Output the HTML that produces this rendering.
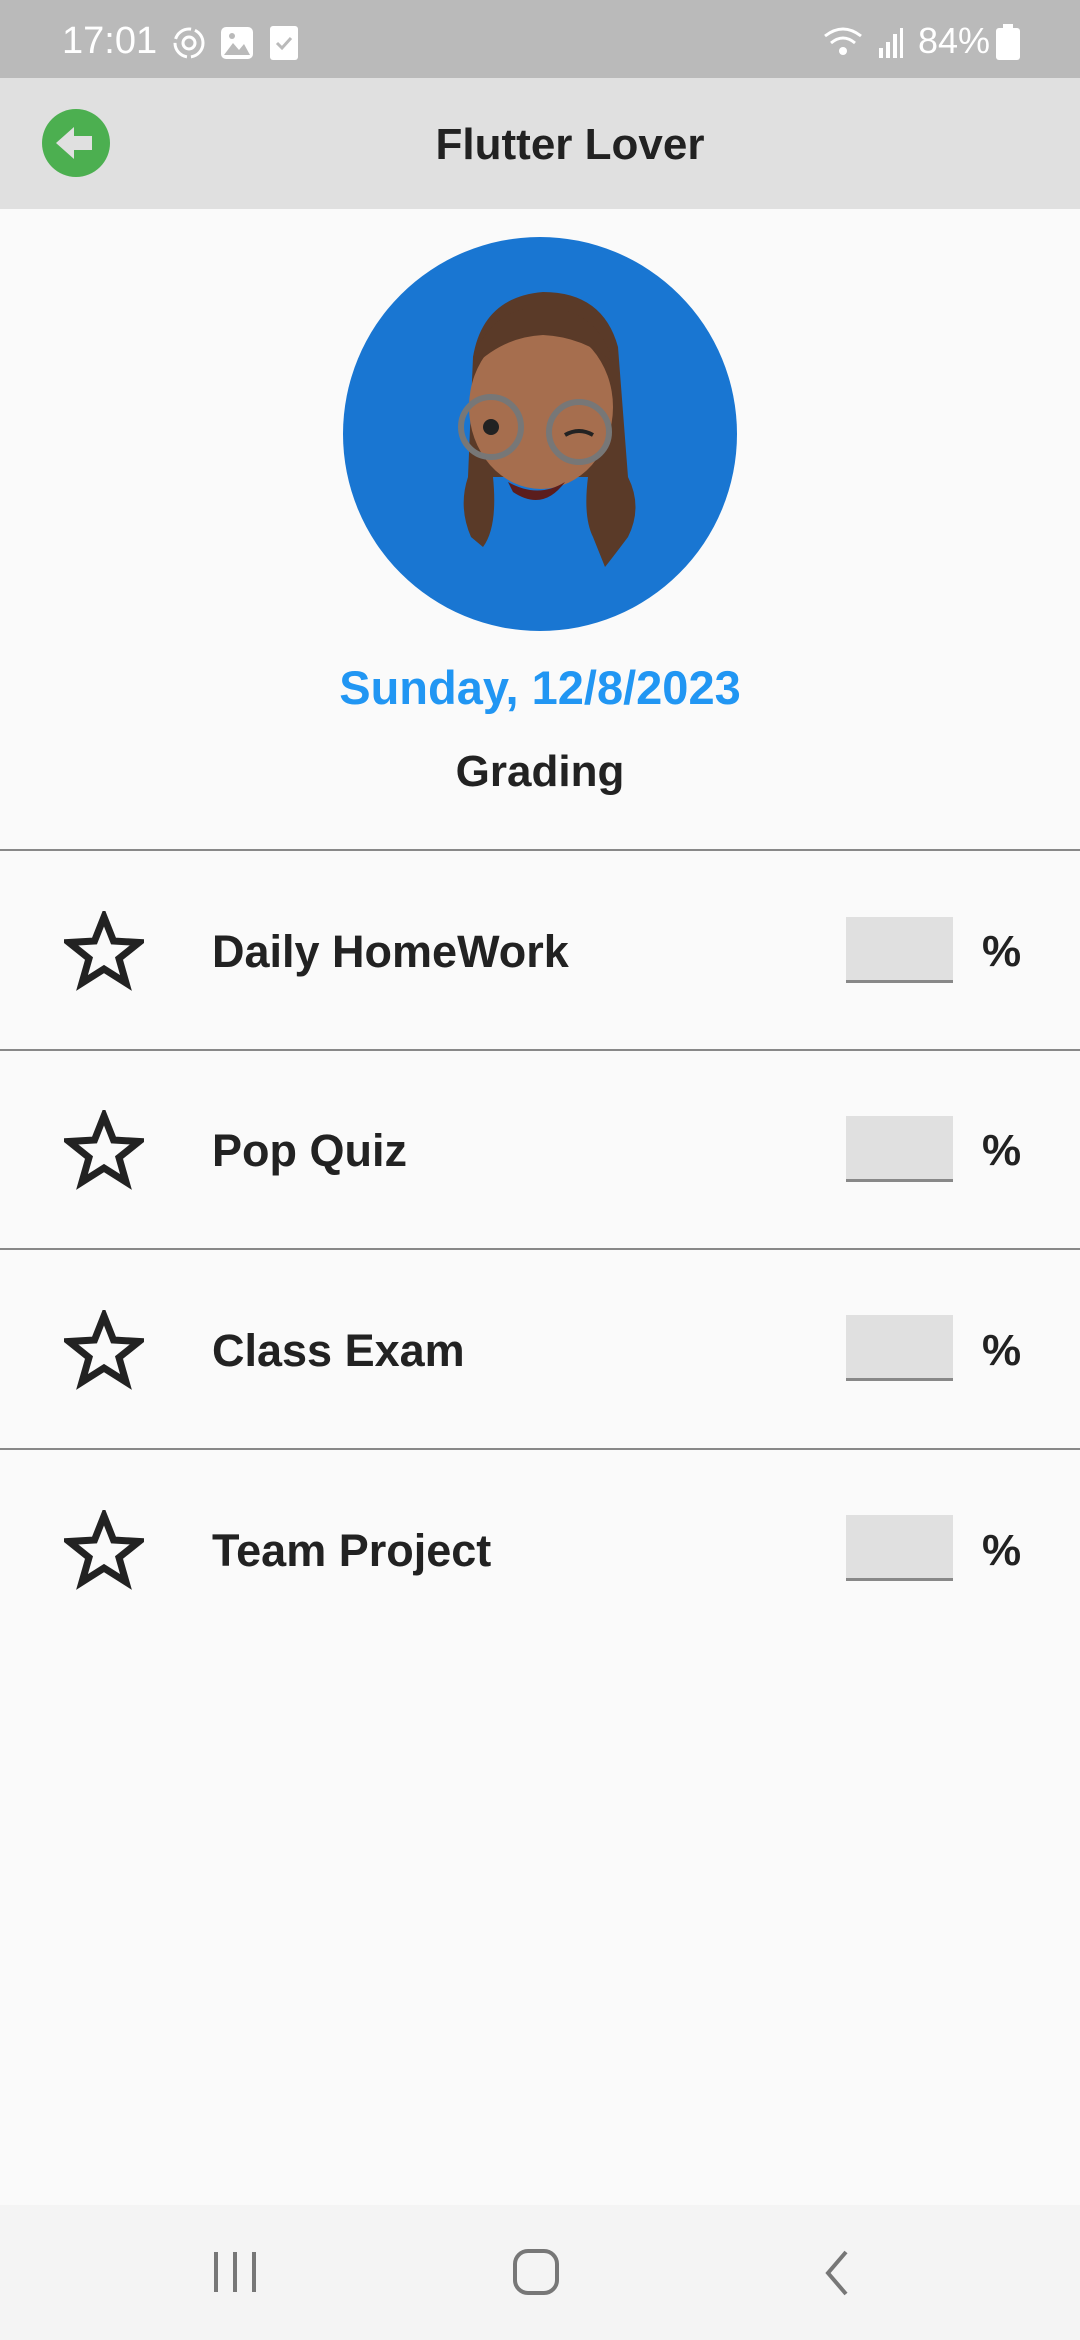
<!DOCTYPE html>
<html><head><meta charset="utf-8"><style>
*{margin:0;padding:0;box-sizing:border-box}
body{width:1080px;height:2340px;background:#fafafa;font-family:"Liberation Sans",Roboto,sans-serif;position:relative;overflow:hidden}
.abs{position:absolute}
.status{left:0;top:0;width:1080px;height:78px;background:#bababa;color:#fff}
.appbar{left:0;top:78px;width:1080px;height:131px;background:#e0e0e0}
.title{left:0;width:1140px;top:120px;text-align:center;font-size:44px;font-weight:bold;color:#222}
.div{left:0;width:1080px;height:2px;background:#888}
.lbl{left:212px;font-size:45px;font-weight:bold;color:#222}
.box{left:846px;width:107px;height:66px;background:#e0e0e0;border-bottom:3px solid #888}
.pct{left:982px;font-size:44px;font-weight:bold;color:#222}
.star{left:64px}
</style></head><body>
<div class="abs status">
 <div class="abs" style="left:62px;top:20px;font-size:38px">17:01</div>
 <svg class="abs" style="left:172px;top:26px" width="34" height="34" viewBox="0 0 34 34"><circle cx="17" cy="17" r="14" fill="none" stroke="#fff" stroke-width="3" stroke-dasharray="20 4"/><circle cx="17" cy="17" r="6" fill="none" stroke="#fff" stroke-width="3"/></svg>
 <svg class="abs" style="left:221px;top:27px" width="32" height="32"><rect width="32" height="32" rx="5" fill="#fff"/><path d="M3 28 L12 16 L18 23 L23 17 L29 28Z" fill="#bababa"/><circle cx="11" cy="9" r="3" fill="#bababa"/></svg>
 <svg class="abs" style="left:270px;top:26px" width="28" height="34"><rect width="28" height="34" rx="3" fill="#fff"/><path d="M7 17 L12 22 L21 12" stroke="#bababa" stroke-width="3" fill="none"/></svg>
 <svg class="abs" style="left:823px;top:26px" width="80" height="34"><path d="M2 10 Q20 -4 38 10" stroke="#fff" stroke-width="3" fill="none"/><path d="M8 17 Q20 7 32 17" stroke="#fff" stroke-width="3" fill="none"/><circle cx="20" cy="25" r="4" fill="#fff"/><rect x="56" y="22" width="4" height="10" fill="#fff"/><rect x="63" y="16" width="4" height="16" fill="#fff"/><rect x="70" y="8" width="4" height="24" fill="#fff"/><rect x="77" y="2" width="3" height="30" fill="#fff"/></svg>
 <div class="abs" style="left:918px;top:20px;font-size:36px">84%</div>
 <svg class="abs" style="left:996px;top:24px" width="24" height="36"><rect x="7" y="0" width="10" height="4" fill="#fff"/><rect x="0" y="4" width="24" height="32" rx="3" fill="#fff"/></svg>
</div>
<div class="abs appbar"></div>
<svg class="abs" style="left:42px;top:109px" width="68" height="68" viewBox="0 0 68 68"><circle cx="34" cy="34" r="34" fill="#4caf50"/><path d="M14 34 L32 18 L32 27 L50 27 L50 41 L32 41 L32 50Z" fill="#e0e0e0"/></svg>
<div class="abs title">Flutter Lover</div>
<svg class="abs" style="left:343px;top:237px" width="394" height="394" viewBox="0 0 394 394">
 <circle cx="197" cy="197" r="197" fill="#1976d2"/>
 <path d="M130 120 Q140 60 200 55 Q260 55 275 110 L285 240 Q300 270 285 300 Q270 320 262 330 L250 300 Q240 280 245 240 L150 240 Q155 290 140 310 L128 300 Q115 270 125 240Z" fill="#5a3a28"/>
 <ellipse cx="198" cy="170" rx="72" ry="82" fill="#a66e4e"/>
 <path d="M130 120 Q150 70 200 70 Q255 72 270 125 Q240 100 200 98 Q160 100 130 130Z" fill="#5a3a28"/>
 <circle cx="148" cy="190" r="30" fill="none" stroke="#777" stroke-width="6"/>
 <circle cx="236" cy="195" r="30" fill="none" stroke="#777" stroke-width="6"/>
 <circle cx="148" cy="190" r="8" fill="#222"/>
 <path d="M222 198 Q236 190 250 198" stroke="#222" stroke-width="4" fill="none"/>
 <path d="M165 245 Q195 262 222 245 Q200 275 170 255Z" fill="#5b1d1d"/>
</svg>
<div class="abs" style="left:0;width:1080px;top:660px;text-align:center;font-size:47px;font-weight:bold;color:#2196f3">Sunday, 12/8/2023</div>
<div class="abs" style="left:0;width:1080px;top:747px;text-align:center;font-size:44px;font-weight:bold;color:#222">Grading</div>

<div class="abs div" style="top:849px"></div>
<div class="abs div" style="top:1049px"></div>
<div class="abs div" style="top:1248px"></div>
<div class="abs div" style="top:1448px"></div>

<svg width="0" height="0" style="position:absolute"><defs><path id="st" d="M40 6 L49.5 30 L75 31.5 L55 47.5 L62 72 L40 58 L18 72 L25 47.5 L5 31.5 L30.5 30Z" fill="none" stroke="#222" stroke-width="7" stroke-linejoin="miter"/></defs></svg>

<svg class="abs star" style="top:911px" width="80" height="80"><use href="#st"/></svg>
<div class="abs lbl" style="top:926px">Daily HomeWork</div>
<div class="abs box" style="top:917px"></div>
<div class="abs pct" style="top:927px">%</div>

<svg class="abs star" style="top:1110px" width="80" height="80"><use href="#st"/></svg>
<div class="abs lbl" style="top:1125px">Pop Quiz</div>
<div class="abs box" style="top:1116px"></div>
<div class="abs pct" style="top:1126px">%</div>

<svg class="abs star" style="top:1310px" width="80" height="80"><use href="#st"/></svg>
<div class="abs lbl" style="top:1325px">Class Exam</div>
<div class="abs box" style="top:1315px"></div>
<div class="abs pct" style="top:1326px">%</div>

<svg class="abs star" style="top:1510px" width="80" height="80"><use href="#st"/></svg>
<div class="abs lbl" style="top:1525px">Team Project</div>
<div class="abs box" style="top:1515px"></div>
<div class="abs pct" style="top:1526px">%</div>

<div class="abs" style="left:0;top:2205px;width:1080px;height:135px;background:#f4f4f4"></div>
<svg class="abs" style="left:210px;top:2250px" width="50" height="44"><rect x="4" y="2" width="4" height="40" fill="#777"/><rect x="23" y="2" width="4" height="40" fill="#777"/><rect x="42" y="2" width="4" height="40" fill="#777"/></svg>
<svg class="abs" style="left:512px;top:2248px" width="48" height="48"><rect x="3" y="3" width="42" height="42" rx="13" fill="none" stroke="#777" stroke-width="4"/></svg>
<svg class="abs" style="left:822px;top:2248px" width="30" height="50"><path d="M24 4 L6 25 L24 46" fill="none" stroke="#777" stroke-width="4"/></svg>
</body></html>
